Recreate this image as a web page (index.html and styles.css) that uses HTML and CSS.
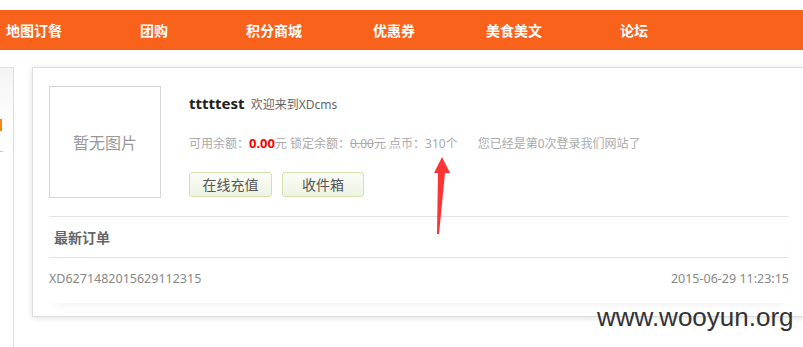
FILE: index.html
```html
<!DOCTYPE html>
<html lang="zh-CN">
<head>
    <meta charset="UTF-8">
    <title>会员中心</title>
    <link rel="stylesheet" href="styles.css">
</head>
<body>

    <!-- top navigation -->
    <nav class="topnav">
        <ul>
            <li><a href="#">地图订餐</a></li>
            <li><a href="#">团购</a></li>
            <li><a href="#">积分商城</a></li>
            <li class="short"><a href="#">优惠券</a></li>
            <li><a href="#">美食美文</a></li>
            <li><a href="#">论坛</a></li>
        </ul>
    </nav>

    <div class="page">
        <aside class="sidebar">
            <span class="sidebar-mark"></span>
            <span class="sidebar-line"></span>
        </aside>

        <main class="card">
            <div class="profile">
                <div class="avatar">暂无图片</div>
                <div class="info">
                    <p class="welcome"><strong>tttttest</strong> 欢迎来到XDcms</p>
                    <p class="balance">可用余额：<b class="money">0.00</b>元 锁定余额：<s>0.00</s>元 点币：310个<span class="login-count">您已经是第0次登录我们网站了</span></p>
                    <div class="actions">
                        <a href="#" class="btn">在线充值</a>
                        <a href="#" class="btn">收件箱</a>
                    </div>
                </div>
            </div>

            <div class="orders">
                <h3>最新订单</h3>
                <div class="order-row">
                    <span>XD6271482015629112315</span>
                    <span>2015-06-29 11:23:15</span>
                </div>
            </div>
        </main>
    </div>

    <!-- annotation arrow -->
    <svg class="arrow" width="20" height="80" viewBox="0 0 20 80">
        <polygon points="10,0 2,16 6,16 5,77 7,77 13,16 18,16" fill="#fb3535"/>
    </svg>

    <div class="watermark">www.wooyun.org</div>

</body>
</html>
```

FILE: styles.css
```css
/* Base */
body {
    margin: 0;
    width: 803px;
    height: 347px;
    overflow: hidden;
    position: relative;
    background: #fff;
    font-family: 'Noto Sans', 'Noto Sans CJK SC', sans-serif;
    color: #666;
}
p {
    margin: 0;
}
a {
    text-decoration: none;
}

/* Top navigation */
.topnav {
    margin-top: 10px;
    height: 40px;
    background-color: #f8621b;
}
.topnav ul {
    list-style: none;
    margin: 0;
    padding: 0 0 0 6px;
    display: flex;
    gap: 78px;
}
.topnav li.short {
    margin: 0 -7px;
}
.topnav a {
    display: block;
    line-height: 40px;
    font-size: 14px;
    font-weight: bold;
    color: #fff;
    font-family: 'Noto Sans CJK SC', sans-serif;
}

/* Page layout */
.page {
    display: flex;
    align-items: flex-start;
    gap: 18px;
    margin-top: 17px;
}
.sidebar {
    position: relative;
    width: 13px;
    height: 279px;
    flex: 0 0 13px;
    border-top: 1px solid #e2e2e2;
    border-right: 1px solid #ddd;
    background: linear-gradient(#f4f4f4, #fff 60px);
}
.sidebar-mark {
    position: absolute;
    left: 0;
    top: 51px;
    width: 2px;
    height: 12px;
    background: #f7850f;
}
.sidebar-line {
    position: absolute;
    left: 0;
    top: 83px;
    width: 3px;
    height: 1px;
    background: #ccc;
}

/* Card */
.card {
    flex: 0 0 740px;
    height: 230px;
    padding: 18px 18px 0 16px;
    border: 1px solid #ddd;
    background: #fff;
    box-shadow: 0 1px 6px rgba(0, 0, 0, 0.12);
}
.profile {
    display: flex;
    height: 112px;
    padding-bottom: 18px;
    border-bottom: 1px solid #e4e4e4;
}
.avatar {
    width: 110px;
    height: 110px;
    border: 1px solid #d6d6d6;
    display: flex;
    align-items: center;
    justify-content: center;
    font-size: 16px;
    color: #999;
    font-family: 'Noto Sans CJK SC', sans-serif;
}
.info {
    padding-left: 28px;
}
.welcome {
    margin-top: 7px;
    height: 20px;
    line-height: 20px;
    font-size: 12px;
    color: #666;
}
.welcome strong {
    font-size: 15px;
    line-height: 20px;
    color: #222;
    margin-right: 3px;
}
.balance {
    margin-top: 20px;
    height: 20px;
    line-height: 20px;
    font-size: 12px;
    color: #aaa;
}
.balance .money {
    color: #f00;
    font-size: 13px;
    line-height: 20px;
}
.balance s {
    color: #aaa;
}
.login-count {
    margin-left: 20px;
}
.actions {
    display: flex;
    gap: 10px;
    margin-top: 19px;
}
.btn {
    display: block;
    height: 23px;
    line-height: 23px;
    text-align: center;
    font-size: 14px;
    color: #555;
    border: 1px solid #d2e2ad;
    border-radius: 3px;
    background: linear-gradient(#fbfdf7, #edf4e2);
}
.btn:first-child {
    width: 81px;
}
.btn:last-child {
    width: 80px;
}

/* Orders */
.orders {
    box-shadow: 0 8px 10px -6px rgba(0, 0, 0, 0.06);
    padding-bottom: 14px;
}
.orders h3 {
    margin: 0;
    padding-left: 5px;
    height: 40px;
    line-height: 42px;
    font-size: 14px;
    color: #666;
    border-bottom: 1px solid #e4e4e4;
}
.order-row {
    display: flex;
    justify-content: space-between;
    margin-top: 11px;
    line-height: 20px;
    font-size: 12.5px;
    color: #888;
}

/* Overlays */
.arrow {
    position: absolute;
    left: 432px;
    top: 157px;
}
.watermark {
    position: absolute;
    left: 597px;
    top: 302px;
    font-family: 'Liberation Sans', Arial, sans-serif;
    font-size: 26px;
    color: #333;
}
```
